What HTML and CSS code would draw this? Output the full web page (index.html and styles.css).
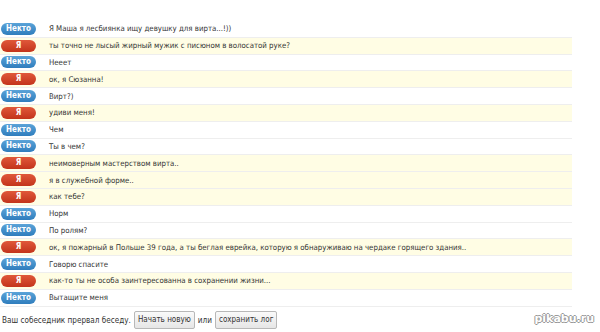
FILE: index.html
```html
<!DOCTYPE html>
<html lang="ru">
<head>
  <meta charset="UTF-8">
  <title>Чат</title>
  <link rel="stylesheet" href="styles.css">
</head>
<body>

<div class="log">
  <div class="msg"><span class="who stranger">Некто</span><span class="text">Я Маша я лесбиянка ищу девушку для вирта...!))</span></div>
  <div class="msg mine"><span class="who me">Я</span><span class="text">ты точно не лысый жирный мужик с писюном в волосатой руке?</span></div>
  <div class="msg"><span class="who stranger">Некто</span><span class="text">Нееет</span></div>
  <div class="msg mine"><span class="who me">Я</span><span class="text">ок, я Сюзанна!</span></div>
  <div class="msg"><span class="who stranger">Некто</span><span class="text">Вирт?)</span></div>
  <div class="msg mine"><span class="who me">Я</span><span class="text">удиви меня!</span></div>
  <div class="msg"><span class="who stranger">Некто</span><span class="text">Чем</span></div>
  <div class="msg"><span class="who stranger">Некто</span><span class="text">Ты в чем?</span></div>
  <div class="msg mine"><span class="who me">Я</span><span class="text">неимоверным мастерством вирта..</span></div>
  <div class="msg mine"><span class="who me">Я</span><span class="text">я в служебной форме..</span></div>
  <div class="msg mine"><span class="who me">Я</span><span class="text">как тебе?</span></div>
  <div class="msg"><span class="who stranger">Некто</span><span class="text">Норм</span></div>
  <div class="msg"><span class="who stranger">Некто</span><span class="text">По ролям?</span></div>
  <div class="msg mine"><span class="who me">Я</span><span class="text">ок, я пожарный в Польше 39 года, а ты беглая еврейка, которую я обнаруживаю на чердаке горящего здания..</span></div>
  <div class="msg"><span class="who stranger">Некто</span><span class="text">Говорю спасите</span></div>
  <div class="msg mine"><span class="who me">Я</span><span class="text">как-то ты не особа заинтересованна в сохранении жизни...</span></div>
  <div class="msg"><span class="who stranger">Некто</span><span class="text">Вытащите меня</span></div>
</div>

<div class="status">
  <span>Ваш собеседник прервал беседу.</span>
  <button class="btn">Начать новую</button>
  <span>или</span>
  <button class="btn">сохранить лог</button>
</div>

<div class="mark">pikabu.ru</div>

</body>
</html>
```

FILE: styles.css
```css
body {
  margin: 0;
  padding: 21px 0 0 0;
  font-family: 'DejaVu Sans Condensed', 'DejaVu Sans', sans-serif;
  font-size: 7.8px;
  color: #333;
  background: #fff;
  position: relative;
  height: 311px;
  overflow: hidden;
}
.log {
  width: 572px;
}
.msg {
  display: flex;
  align-items: center;
  height: 15.8px;
  border-bottom: 1px solid #eeeeee;
}
.msg.mine {
  background-color: #fffde4;
}
.who {
  width: 35px;
  height: 12px;
  margin-left: 1px;
  border-radius: 6px;
  color: #fff;
  font-weight: bold;
  font-size: 8px;
  line-height: 12px;
  text-align: center;
}
.stranger {
  background: linear-gradient(#5aa3d8, #2f7dbd);
}
.me {
  background: linear-gradient(#e0583a, #c3341b);
}
.text {
  margin-left: 13px;
  white-space: nowrap;
}
.status {
  padding: 4px 0 0 2px;
  display: flex;
  align-items: center;
  font-size: 8.1px;
}
.status span {
  margin-right: 3px;
}
.btn {
  font-family: 'DejaVu Sans Condensed', 'DejaVu Sans', sans-serif;
  font-size: 8px;
  color: #333;
  background: linear-gradient(#fafafa, #e6e6e6);
  border: 1px solid #b8b8b8;
  border-radius: 2px;
  height: 18px;
  padding: 0 3px;
  margin-right: 3px;
}
.mark {
  position: absolute;
  right: 6px;
  bottom: 7px;
  font-family: 'DejaVu Sans', sans-serif;
  font-weight: bold;
  font-size: 11px;
  color: #fff;
  text-shadow: 1px 0 0 #999, -1px 0 0 #999, 0 1px 0 #999, 0 -1px 0 #999;
}
```
